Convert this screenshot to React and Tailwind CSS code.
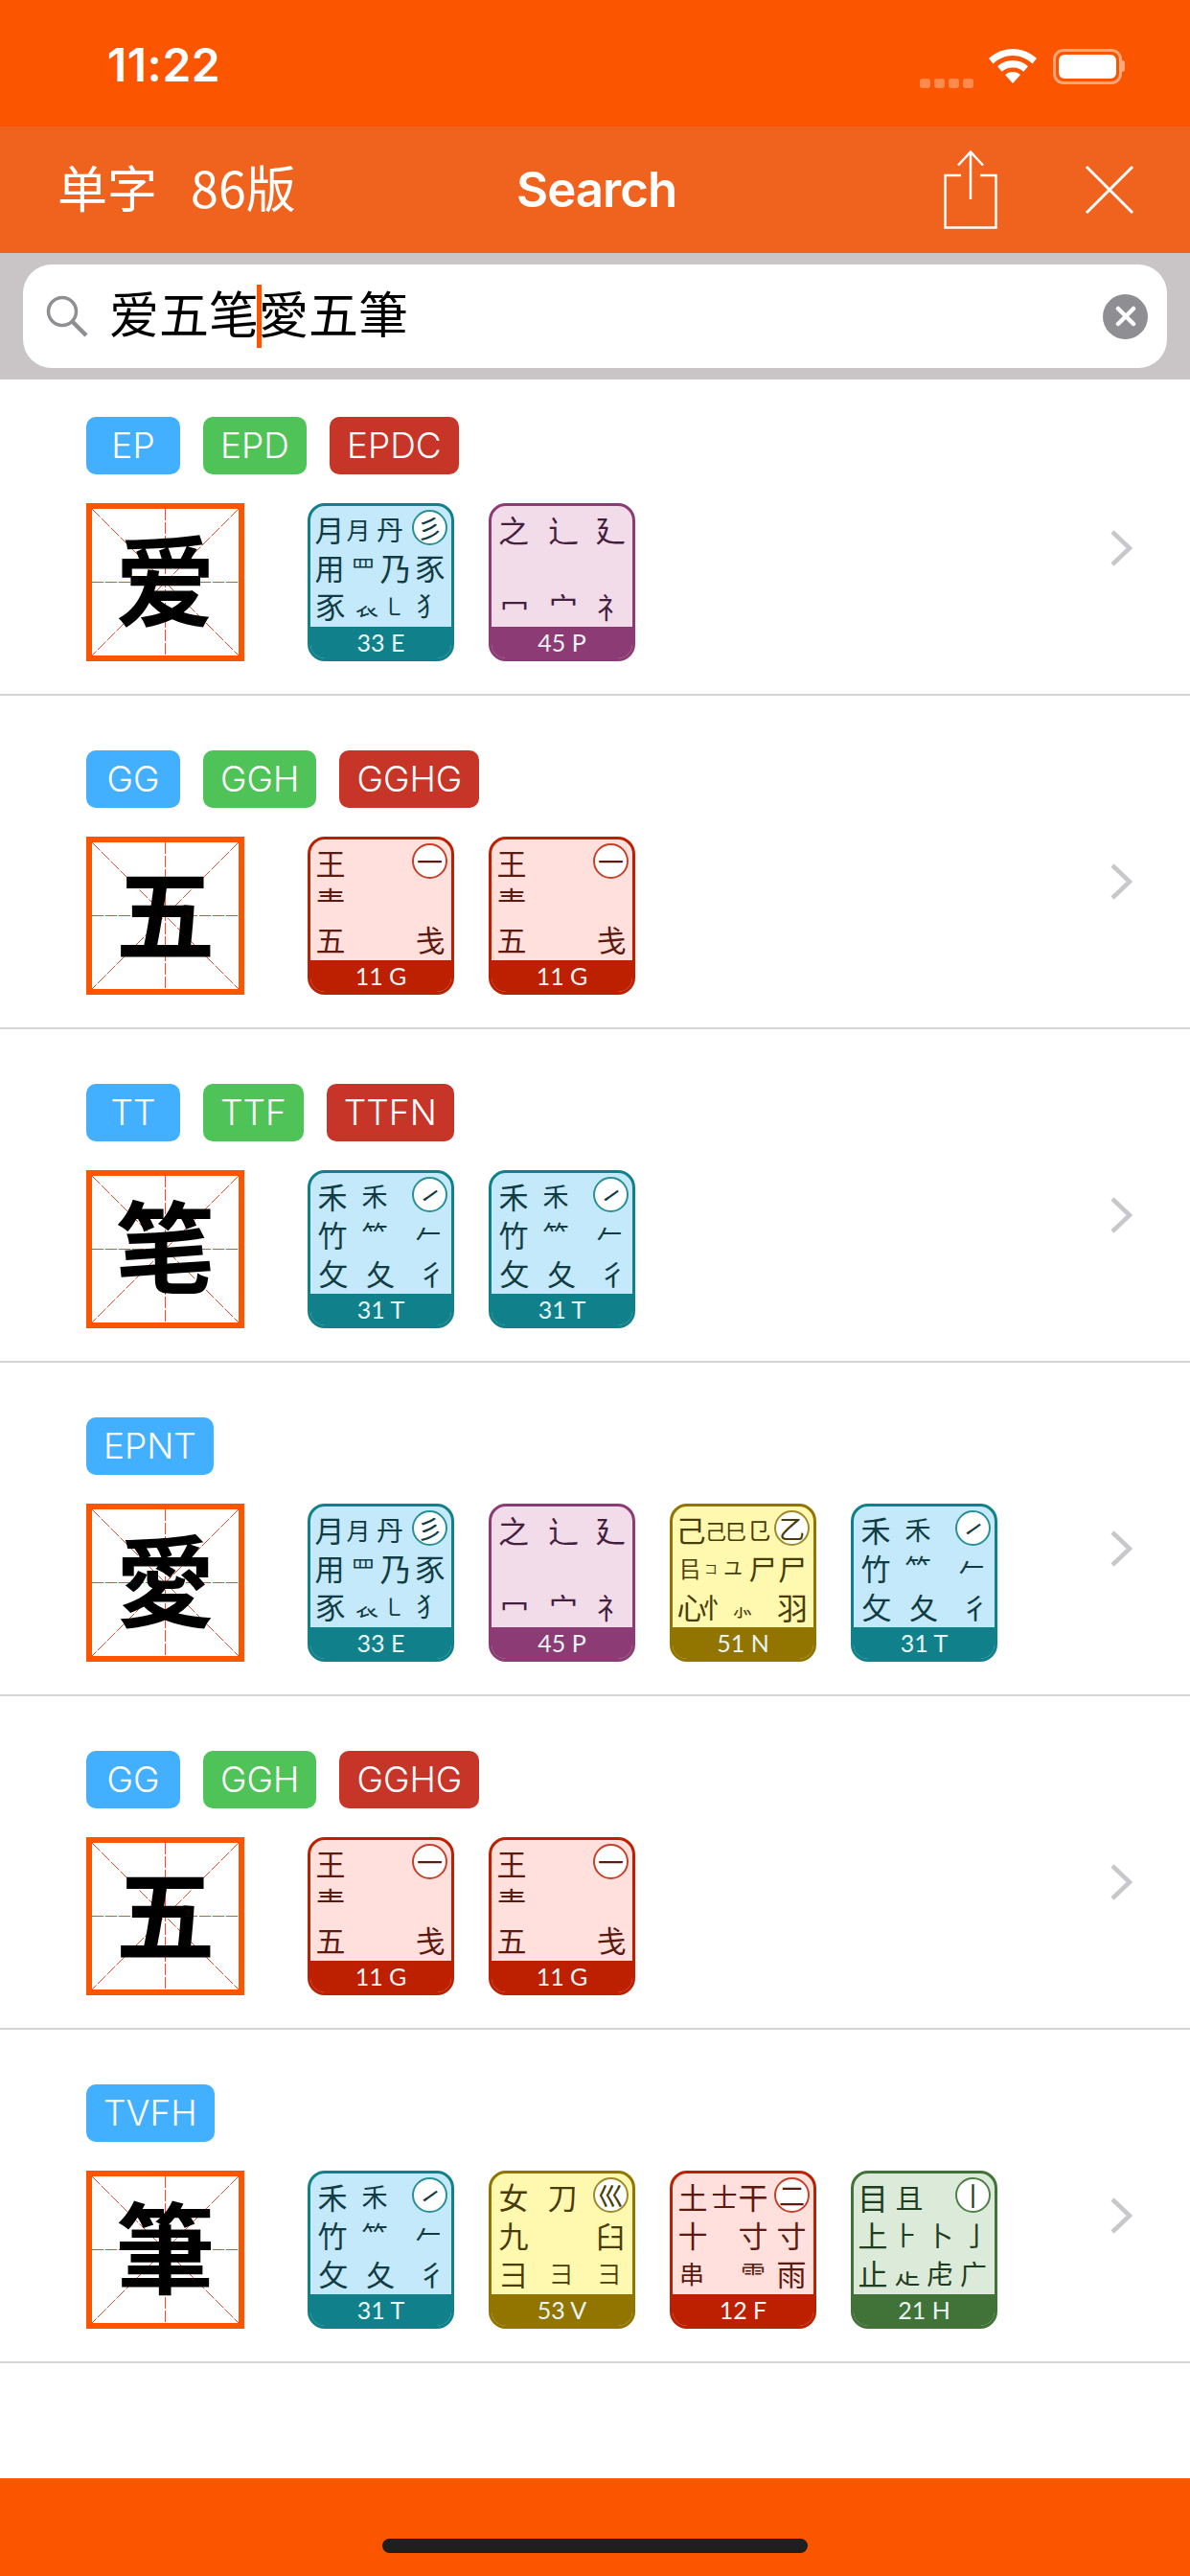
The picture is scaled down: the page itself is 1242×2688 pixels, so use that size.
import React from "react";

const cjk = { fontFamily: '"Noto Sans CJK SC", sans-serif' };

// colours per radical zone
const themes = {
  teal: { border: "border-[#10818a]", bg: "bg-[#c3e9fb]", strip: "bg-[#10818a]", text: "text-[#123c44]", ring: "border-[#2a9097]" },
  purple: { border: "border-[#8d3b74]", bg: "bg-[#f2dce9]", strip: "bg-[#8d3b74]", text: "text-[#44203f]", ring: "border-[#8d3b74]" },
  red: { border: "border-[#bc2000]", bg: "bg-[#ffe0dc]", strip: "bg-[#bc2000]", text: "text-[#5c1a10]", ring: "border-[#c8402a]" },
  yellow: { border: "border-[#927400]", bg: "bg-[#fff9b0]", strip: "bg-[#927400]", text: "text-[#4a3c08]", ring: "border-[#a08a2a]" },
  green: { border: "border-[#417237]", bg: "bg-[#dcebd9]", strip: "bg-[#417237]", text: "text-[#1f3d20]", ring: "border-[#4f8048]" },
};

// each glyph: [char, centre x inside the card, font size]
const roots = {
  E: {
    theme: "teal", label: "33 E", mark: "彡",
    rows: [
      [["月", 23, 31], ["月", 53, 25], ["丹", 86, 28]],
      [["用", 23, 31], ["罒", 58, 25], ["乃", 92, 33], ["豕", 128, 31]],
      [["豕", 24, 31], ["𧘇", 62, 24], ["㇄", 90, 24], ["犭", 127, 27]],
    ],
  },
  P: {
    theme: "purple", label: "45 P", mark: "",
    rows: [
      [["之", 26, 32], ["辶", 78, 32], ["廴", 127, 32]],
      [],
      [["冖", 27, 30], ["宀", 78, 30], ["礻", 128, 30]],
    ],
  },
  G: {
    theme: "red", label: "11 G", mark: "一",
    rows: [
      [["王", 24, 31]],
      [["龶", 24, 31]],
      [["五", 24, 31], ["戋", 128, 31]],
    ],
  },
  T: {
    theme: "teal", label: "31 T", mark: "㇀", markClass: "-rotate-[20deg]",
    rows: [
      [["禾", 26, 31], ["禾", 70, 27]],
      [["竹", 26, 31], ["⺮", 70, 27], ["𠂉", 126, 27]],
      [["攵", 27, 31], ["夂", 76, 30], ["彳", 130, 30]],
    ],
  },
  N: {
    theme: "yellow", label: "51 N", mark: "乙",
    rows: [
      [["己", 22, 31], ["己", 48, 22], ["巳", 69, 22], ["㔾", 93, 24]],
      [["㠯", 21, 24], ["コ", 43, 14], ["ユ", 66, 20], ["尸", 97, 29], ["尸", 128, 30]],
      [["心", 23, 31], ["忄", 49, 29], ["⺗", 76, 22], ["羽", 128, 32]],
    ],
  },
  V: {
    theme: "yellow", label: "53 V", mark: "巛",
    rows: [
      [["女", 26, 31], ["刀", 77, 31]],
      [["九", 26, 31], ["臼", 127, 30]],
      [["彐", 26, 30], ["彐", 76, 24], ["彐", 126, 24]],
    ],
  },
  F: {
    theme: "red", label: "12 F", mark: "二",
    rows: [
      [["土", 24, 31], ["士", 57, 27], ["干", 87, 31]],
      [["十", 24, 31], ["寸", 87, 31], ["寸", 127, 31]],
      [["串", 23, 26], ["⻗", 87, 26], ["雨", 127, 31]],
    ],
  },
  H: {
    theme: "green", label: "21 H", mark: "丨",
    rows: [
      [["目", 23, 32], ["且", 61, 29]],
      [["上", 23, 31], ["⺊", 57, 27], ["卜", 93, 28], ["亅", 131, 28]],
      [["止", 23, 31], ["龰", 59, 27], ["虍", 93, 28], ["广", 128, 28]],
    ],
  },
};

const items = [
  { char: "爱", codes: ["EP", "EPD", "EPDC"], roots: ["E", "P"] },
  { char: "五", codes: ["GG", "GGH", "GGHG"], roots: ["G", "G"] },
  { char: "笔", codes: ["TT", "TTF", "TTFN"], roots: ["T", "T"] },
  { char: "愛", codes: ["EPNT"], roots: ["E", "P", "N", "T"] },
  { char: "五", codes: ["GG", "GGH", "GGHG"], roots: ["G", "G"] },
  { char: "筆", codes: ["TVFH"], roots: ["T", "V", "F", "H"] },
];

const badgeColors = ["bg-[#42b0ff]", "bg-[#4fc357]", "bg-[#c63527]"];

function GlyphRow({ glyphs }) {
  return (
    <div className="flex h-[40px] items-center">
      {glyphs.map(([g, cx, size], j) => {
        // cells are 40px wide, centred on cx
        const prev = j === 0 ? 3 : glyphs[j - 1][1] + 20;
        return (
          <span
            key={j}
            className="w-[40px] shrink-0 text-center leading-[40px]"
            style={{ marginLeft: cx - 20 - prev, fontSize: size }}
          >
            {g}
          </span>
        );
      })}
    </div>
  );
}

function RootCard({ id }) {
  const root = roots[id];
  const t = themes[root.theme];
  return (
    <div className={`relative w-[153px] h-[165px] rounded-[18px] border-[3px] overflow-hidden flex flex-col shrink-0 ${t.border} ${t.bg}`}>
      <div className={`flex-1 flex flex-col pt-[4px] ${t.text}`} style={cjk}>
        {root.rows.map((row, i) => (
          <GlyphRow key={i} glyphs={row} />
        ))}
      </div>
      <div className={`h-[33px] shrink-0 flex items-center justify-center text-[#e8f4f4] text-[25px] leading-none font-['Lato',sans-serif] ${t.strip}`}>
        {root.label}
      </div>
      {root.mark && (
        <div className={`absolute top-[4px] right-[4px] w-[37px] h-[37px] rounded-full border-[2px] bg-white flex items-center justify-center text-[27px] leading-none ${t.ring} ${t.text}`} style={cjk}>
          <span className={root.markClass}>{root.mark}</span>
        </div>
      )}
    </div>
  );
}

function CharBox({ char }) {
  return (
    <div className="relative w-[165px] h-[165px] border-[6px] border-[#fb5500] bg-white shrink-0">
      <svg className="absolute inset-0 w-full h-full" viewBox="0 0 153 153" fill="none" stroke="#f4472a" strokeWidth="1" strokeDasharray="12 2">
        <path d="M0 0L153 153M153 0L0 153M76.5 0V153M0 76.5H153" />
      </svg>
      <div className="absolute inset-0 flex items-center justify-center text-black text-[104px] leading-none font-bold pb-[14px]" style={cjk}>
        {char}
      </div>
    </div>
  );
}

function ResultRow({ item, first }) {
  return (
    <div className={`border-b-[2px] border-[#d4d4d4] pl-[90px] pb-[34px] flex flex-col bg-white ${first ? "pt-[39px]" : "pt-[57px]"}`}>
      <div className="flex gap-[24px] h-[60px]">
        {item.codes.map((code, i) => (
          <span key={code} className={`h-[60px] px-[18px] min-w-[98px] rounded-[10px] flex items-center justify-center text-white text-[37px] font-['Inter',sans-serif] font-light ${badgeColors[i]}`}>
            {code}
          </span>
        ))}
      </div>
      <div className="flex items-start mt-[30px]">
        <CharBox char={item.char} />
        <div className="flex gap-[36px] ml-[66px] w-[837px]">
          {item.roots.map((id, i) => (
            <RootCard key={i} id={id} />
          ))}
        </div>
        <svg width="25" height="40" viewBox="0 0 25 40" fill="none" stroke="#c7c7cc" strokeWidth="4.500" className="mt-[27px]">
          <path d="M3 3L21 20L3 37" />
        </svg>
      </div>
    </div>
  );
}

function StatusBar() {
  return (
    <div className="h-[132px] bg-[#fb5500] flex items-start justify-between pl-[112px] pr-[68px] pt-[38px]">
      <span className="text-white text-[48px] leading-[60px] font-semibold font-['Inter',sans-serif] tracking-[0.5px]">11:22</span>
      <div className="flex items-center gap-[16px] h-[60px] pt-[2px]">
        <div className="flex gap-[4px] self-end mb-[6px]">
          {[0, 1, 2, 3].map((d) => (
            <span key={d} className="w-[11px] h-[10px] rounded-[3px] bg-[#ff8a4d]" />
          ))}
        </div>
        <svg width="50" height="36" viewBox="0 0 50 36" fill="white">
          <path d="M25 0C16 0 7 3.6 0 10l4.500 5.500C10.500 10 17.500 7 25 7s14.500 3 20.500 8.500L50 10C43 3.600 34 0 25 0z" />
          <path d="M25 12c-6 0-11.500 2.200-16 6.200l4.700 5.500C16.700 21 20.700 19.500 25 19.500s8.300 1.500 11.300 4.200l4.700-5.500C36.500 14.200 31 12 25 12z" />
          <path d="M25 24c-3 0-5.800 1-8 3l8 9 8-9c-2.200-2-5-3-8-3z" />
        </svg>
        <div className="flex items-center ml-[1px]">
          <div className="w-[72px] h-[37px] rounded-[11px] border-[3px] border-[#fda77a] p-[3px]">
            <div className="w-full h-full rounded-[6px] bg-white" />
          </div>
          <span className="w-[3px] h-[12px] bg-[#fda77a] rounded-r-[3px]" />
        </div>
      </div>
    </div>
  );
}

function NavBar() {
  return (
    <div className="relative h-[132px] bg-[#f0631e] flex items-center justify-between pl-[60px] pr-[58px] text-white">
      <div className="text-[52px] leading-none flex gap-[35px] pb-[6px]" style={cjk}>
        <span>单字</span>
        <span>86版</span>
      </div>
      <span className="absolute left-[539px] top-[36px] text-[51px] leading-[60px] font-semibold font-['Inter',sans-serif] tracking-[-1px]">Search</span>
      <div className="flex items-center gap-[91px]">
        <svg width="56" height="82" viewBox="0 0 56 82" fill="none" stroke="white" strokeWidth="2.500" className="ml-[2px]">
          <path d="M18 26H1.500V80.500H54.500V26H38" />
          <path d="M28 1.500V51M15 15.500L28 1.500L41 15.500" />
        </svg>
        <svg width="52" height="52" viewBox="0 0 52 52" fill="none" stroke="white" strokeWidth="3">
          <path d="M2 2L50 50M50 2L2 50" />
        </svg>
      </div>
    </div>
  );
}

function SearchBar() {
  return (
    <div className="h-[132px] bg-[#c9c4c6] px-[24px] py-[12px]">
      <div className="h-[108px] rounded-[30px] bg-white flex items-center pl-[24px] pr-[20px]">
        <svg width="44" height="44" viewBox="0 0 44 44" fill="none" stroke="#8e8e93" strokeWidth="3.500" className="shrink-0">
          <circle cx="17" cy="17" r="14.500" />
          <path d="M28 28L42 42" strokeWidth="4.500" />
        </svg>
        <div className="ml-[22px] text-black text-[52px] leading-none flex items-center pb-[8px]" style={cjk}>
          <span>爱五笔</span>
          <span className="w-[5px] h-[66px] bg-[#fb5500] mx-[-2.500px] mt-[8px] relative" />
          <span>愛五筆</span>
        </div>
        <div className="ml-auto w-[47px] h-[47px] rounded-full bg-[#8e8e93] flex items-center justify-center">
          <svg width="22" height="22" viewBox="0 0 22 22" fill="none" stroke="white" strokeWidth="4.500" strokeLinecap="round">
            <path d="M3 3L19 19M19 3L3 19" />
          </svg>
        </div>
      </div>
    </div>
  );
}

export default function App() {
  return (
    <div className="w-[1242px] h-[2688px] flex flex-col bg-white overflow-hidden">
      <StatusBar />
      <NavBar />
      <SearchBar />
      <div className="flex-1">
        {items.map((item, i) => (
          <ResultRow key={i} item={item} first={i === 0} />
        ))}
      </div>
      <div className="h-[102px] bg-[#fb5500] flex justify-center items-end pb-[24px]">
        <div className="w-[444px] h-[15px] rounded-full bg-[#1f1f1f]" />
      </div>
    </div>
  );
}
